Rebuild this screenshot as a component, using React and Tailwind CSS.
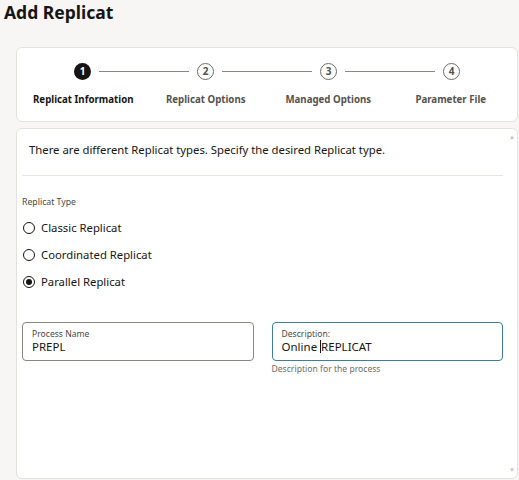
import React from 'react';

const steps = [
    { n: 1, label: 'Replicat Information', active: true },
    { n: 2, label: 'Replicat Options' },
    { n: 3, label: 'Managed Options' },
    { n: 4, label: 'Parameter File' },
];

const replicatTypes = [
    { id: 'classic', label: 'Classic Replicat' },
    { id: 'coordinated', label: 'Coordinated Replicat' },
    { id: 'parallel', label: 'Parallel Replicat' },
];

function StepCircle({ n, active }) {
    return active ? (
        <div className="w-[17px] h-[17px] rounded-full bg-[#161513] text-white text-[10px] font-bold flex items-center justify-center shrink-0">
            {n}
        </div>
    ) : (
        <div className="w-[17px] h-[17px] rounded-full border-[1.5px] border-[#6f6c68] bg-white text-[#55524e] text-[10px] font-bold flex items-center justify-center shrink-0">
            {n}
        </div>
    );
}

function Radio({ checked }) {
    return (
        <div className="w-[12px] h-[12px] rounded-full border-[1.5px] border-[#161513] flex items-center justify-center shrink-0">
            {checked && <div className="w-[6px] h-[6px] rounded-full bg-[#161513]" />}
        </div>
    );
}

export default function App() {
    const selected = 'parallel';

    return (
        <div className="w-[519px] h-[480px] overflow-hidden bg-[#f7f6f4] text-[#161513] font-['Noto_Sans',sans-serif]">
            <h1 className="pl-[4px] h-[47px] text-[17.5px] font-bold leading-[24px]">Add Replicat</h1>

            <div className="ml-[16px] mr-[1px] flex flex-col gap-[6px]">
                {/* Train stepper */}
                <div className="h-[75px] bg-white border border-[#e4e2de] rounded-[6px] pt-[15px]">
                    <div className="flex items-center px-[57px]">
                        {steps.map((s, i) => (
                            <React.Fragment key={s.n}>
                                <StepCircle n={s.n} active={s.active} />
                                {i < steps.length - 1 && <div className="flex-1 mx-[8px] h-px bg-[#8a8783]" />}
                            </React.Fragment>
                        ))}
                    </div>
                    <div className="grid grid-cols-4 px-[5px] mt-[13px]">
                        {steps.map((s) => (
                            <div
                                key={s.n}
                                className={`text-center text-[9.7px] font-bold leading-[14px] ${s.active ? 'text-[#161513]' : 'text-[#55524e]'}`}
                            >
                                {s.label}
                            </div>
                        ))}
                    </div>
                </div>

                {/* Replicat information form */}
                <div className="h-[351px] bg-white border border-[#e4e2de] rounded-[6px] flex">
                    <div className="flex-1 pl-[5px] pr-[4px]">
                        <p className="pl-[7px] pt-[12px] h-[46px] text-[11.3px] leading-[18px]">
                            There are different Replicat types. Specify the desired Replicat type.
                        </p>
                        <div className="h-px bg-[#e8e6e3]" />

                        <div className="mt-[20px] text-[8.7px] leading-[12px] text-[#4b4945]">Replicat Type</div>
                        <div className="mt-[13px] flex flex-col gap-[13px]">
                            {replicatTypes.map((t) => (
                                <label key={t.id} className="flex items-center gap-[6px] pl-[1px] h-[14px] text-[11.3px]">
                                    <Radio checked={t.id === selected} />
                                    <span>{t.label}</span>
                                </label>
                            ))}
                        </div>

                        <div className="mt-[33px] grid grid-cols-2 gap-[18px]">
                            <div className="h-[39px] border border-[#8a8783] rounded-[4px] px-[9px] pt-[6px]">
                                <div className="text-[8.6px] leading-[11px] text-[#4b4945]">Process Name</div>
                                <div className="text-[11.5px] leading-[14px]">PREPL</div>
                            </div>
                            <div>
                                <div className="h-[39px] border-[1.5px] border-[#3f7d98] rounded-[4px] px-[9px] pt-[5.5px]">
                                    <div className="text-[8.6px] leading-[11px] text-[#4b4945]">Description:</div>
                                    <div className="text-[11.5px] leading-[14px] flex items-center">
                                        <span>Online&nbsp;</span>
                                        <span className="w-px h-[13px] bg-[#161513]" />
                                        <span>REPLICAT</span>
                                    </div>
                                </div>
                                <div className="mt-[2px] text-[8.6px] leading-[12px] text-[#6f6c68]">Description for the process</div>
                            </div>
                        </div>
                    </div>

                    {/* scrollbar */}
                    <div className="w-[10px] flex flex-col justify-between items-center py-[5px] text-[6px] leading-none text-[#c4c2be]">
                        <span>▲</span>
                        <span>▼</span>
                    </div>
                </div>
            </div>
        </div>
    );
}
